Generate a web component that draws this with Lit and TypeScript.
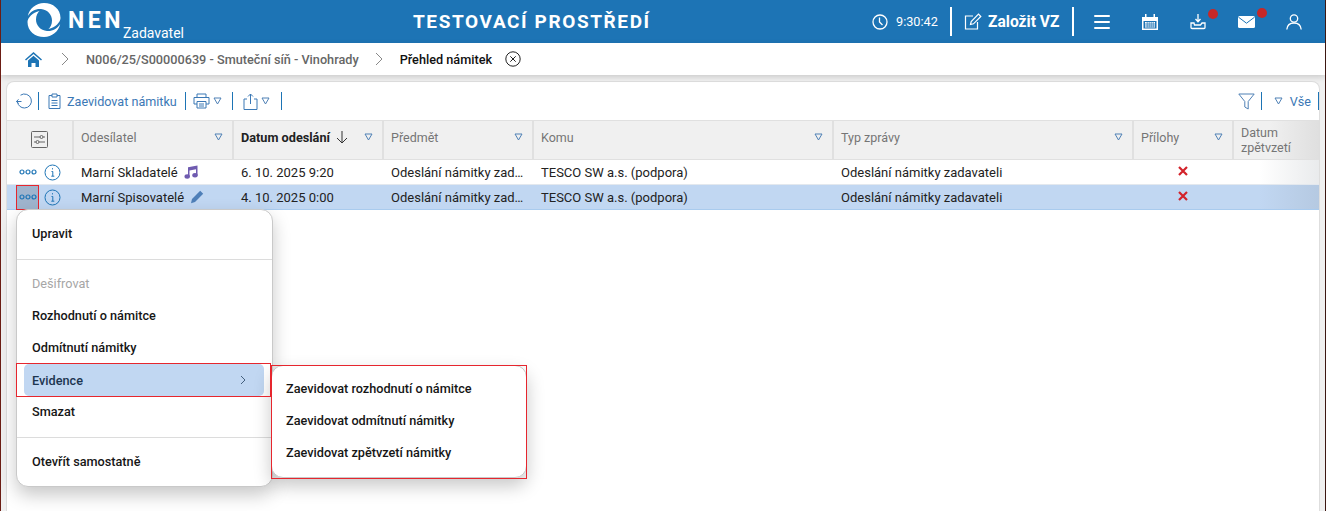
import { LitElement, html, css, svg } from 'lit';
import { customElement } from 'lit/decorators.js';

const tri = svg`<svg class="tri" width="9" height="8" viewBox="0 0 9 8"><path d="M1 1h7L4.500 7z" fill="none" stroke="currentColor" stroke-width="1"/></svg>`;

const columns = [
  { label: 'Odesílatel', width: 160 },
  { label: 'Datum odeslání', width: 150, sorted: true },
  { label: 'Předmět', width: 150 },
  { label: 'Komu', width: 300 },
  { label: 'Typ zprávy', width: 300 },
  { label: 'Přílohy', width: 100 },
];

const dots = html`<svg width="18" height="6" viewBox="0 0 18 6" fill="none" stroke="#1d74b5" stroke-width="1.200">
  <circle cx="3" cy="3" r="2" /><circle cx="9" cy="3" r="2" /><circle cx="15" cy="3" r="2" />
</svg>`;

const info = html`<svg width="17" height="17" viewBox="0 0 17 17" fill="none" stroke="#1d74b5">
  <circle cx="8.500" cy="8.500" r="7.500" /><path d="M7.500 7.500h1.300v4.500M7.300 12.200h3M8.500 4.200v1.200" />
</svg>`;

const music = html`<svg width="14" height="14" viewBox="0 0 14 14" fill="#6f5bb0">
  <path d="M4 2.200 13.500.5v10H12V4.300L5.500 5.500V12H4z" /><ellipse cx="3.200" cy="11.500" rx="2.700" ry="2.200" /><ellipse cx="11" cy="10.300" rx="2.700" ry="2.200" />
</svg>`;

const pencil = html`<svg width="14" height="14" viewBox="0 0 14 14" fill="#4e7fb8">
  <path d="M10.200.8l3 3L5 12l-4 1.300L2 9z" />
</svg>`;

const cross = html`<svg width="10" height="10" viewBox="0 0 10 10" stroke="#d3222a" stroke-width="2.200">
  <path d="M1 1l8 8M9 1l-8 8" />
</svg>`;

const rows = [
  { sender: 'Marní Skladatelé', icon: music, date: '6. 10. 2025 9:20', selected: false },
  { sender: 'Marní Spisovatelé', icon: pencil, date: '4. 10. 2025 0:00', selected: true },
];

@customElement('app-root')
export class AppRoot extends LitElement {
  static styles = css`
    :host {
      display: block;
      height: 511px;
      overflow: hidden;
      position: relative;
      background: #f0f0f0;
      font-family: Roboto, 'Liberation Sans', sans-serif;
      font-size: 13px;
      color: #222;
      border-left: 1px solid #6b1d14;
      border-right: 1px solid #3d1712;
      box-sizing: border-box;
    }

    /* top bar */
    .top {
      height: 43px;
      background: #1d74b5;
      color: #fff;
      display: flex;
      align-items: center;
      position: relative;
    }
    .logo {
      margin-left: 26px;
      display: flex;
      align-items: flex-start;
      width: 360px;
    }
    .nen {
      font-size: 23px;
      font-weight: 700;
      letter-spacing: 3.500px;
      margin: 3px 0 0 7px;
      line-height: 30px;
    }
    .role {
      font-size: 14px;
      margin-top: 22px;
      margin-left: -1px;
    }
    .env {
      position: absolute;
      left: 412px;
      top: 10px;
      font-size: 19px;
      font-weight: 700;
      letter-spacing: 1.600px;
      line-height: 24px;
    }
    .top-right {
      margin-left: auto;
      display: flex;
      align-items: center;
      height: 100%;
    }
    .clock {
      display: flex;
      align-items: center;
      gap: 8px;
      width: 78px;
      font-size: 12.700px;
    }
    .vr {
      width: 2px;
      height: 29px;
      background: #fff;
    }
    .create {
      display: flex;
      align-items: center;
      gap: 6px;
      font-size: 15.600px;
      font-weight: 700;
      width: 120px;
      padding-left: 12px;
      box-sizing: border-box;
    }
    .top-icons {
      display: flex;
      align-items: center;
      margin-left: 20px;
      gap: 32px;
      margin-right: 23px;
    }
    .user {
      margin-left: -1px;
    }
    .badged {
      position: relative;
      display: flex;
    }
    .badge {
      position: absolute;
      width: 10px;
      height: 10px;
      border-radius: 50%;
      background: #c62828;
      top: -5px;
      right: -12px;
    }
    .badge.mail {
      top: -8px;
    }

    /* breadcrumb */
    .crumbs {
      height: 32px;
      background: #fff;
      display: flex;
      align-items: center;
      box-shadow: 0 2px 6px rgba(0, 0, 0, 0.16);
      position: relative;
      font-size: 12.700px;
      font-weight: 500;
      color: #666;
      padding-left: 24px;
    }
    .crumbs .current {
      color: #111;
    }
    .sep-first {
      margin: 0 17px 0 19px;
    }
    .sep-next {
      margin: 0 17px 0 16px;
    }
    .close {
      margin-left: 13px;
      display: flex;
    }

    /* card */
    .card {
      margin: 6px 5px 0 5px;
      height: 440px;
      background: #fff;
      border: 1px solid #dedede;
      border-bottom: 0;
      border-radius: 8px 8px 0 0;
      overflow: hidden;
    }
    .toolbar {
      height: 38px;
      display: flex;
      align-items: center;
      padding-left: 9px;
      color: #3b78b5;
      font-size: 12.600px;
      box-sizing: border-box;
    }
    .tb-sep {
      width: 1px;
      height: 18px;
      background: #1d74b5;
    }
    .tb-btn {
      display: flex;
      align-items: center;
    }
    .tri {
      color: #4f80b5;
      display: block;
    }
    .tb-right {
      margin-left: auto;
      display: flex;
      align-items: center;
    }

    /* table */
    .head {
      height: 38px;
      display: flex;
      background: #f0f0f0;
      border-top: 1px solid #e0e0e0;
      border-bottom: 1px solid #e0e0e0;
      color: #757575;
      font-size: 12.500px;
      position: relative;
    }
    .head::after {
      content: '';
      position: absolute;
      right: 0;
      top: 0;
      bottom: 0;
      width: 50px;
      background: linear-gradient(to right, rgba(120, 120, 120, 0), rgba(120, 120, 120, 0.14));
    }
    .hcell {
      border-left: 2px solid #e0e0e0;
      display: flex;
      align-items: center;
      justify-content: space-between;
      padding: 0 9px 6px 7px;
      box-sizing: border-box;
      flex: none;
    }
    .hcell.sorted {
      color: #222;
      font-weight: 700;
      font-size: 12.700px;
    }
    .hcell .name {
      display: flex;
      align-items: center;
      gap: 6px;
    }
    .hcell.first {
      border-left: 0;
      width: 65px;
      justify-content: center;
      padding: 0 0 1px;
    }
    .hcell.last {
      flex: 1;
      line-height: 15px;
      padding-bottom: 0;
    }
    .row {
      height: 24px;
      display: flex;
      align-items: center;
      border-bottom: 1px solid #e3e8ee;
      font-size: 13px;
      color: #222;
      position: relative;
    }
    .row.selected {
      background: #c1d7f2;
      border-bottom-color: #a9cbee;
    }
    .row::after {
      content: '';
      position: absolute;
      right: 0;
      top: 0;
      bottom: 0;
      width: 60px;
      background: linear-gradient(to right, rgba(120, 130, 140, 0), rgba(120, 130, 140, 0.16));
    }
    .actions {
      width: 65px;
      flex: none;
      display: flex;
      align-items: center;
      height: 100%;
    }
    .more {
      width: 23px;
      height: 25px;
      margin-left: 9px;
      flex: none;
      display: flex;
      align-items: center;
      justify-content: center;
      box-sizing: border-box;
      margin-right: 5px;
    }
    .row.selected .more {
      background: #9fb4cd;
      outline: 1px solid #e6262e;
      outline-offset: -1px;
    }
    .cell {
      flex: none;
      box-sizing: border-box;
      padding-left: 9px;
      white-space: nowrap;
      display: flex;
      align-items: center;
      gap: 6px;
    }
    .cell.center {
      justify-content: center;
      padding: 0 0 3px 2px;
    }

    /* context menus */
    .menu {
      position: absolute;
      background: #fff;
      border: 1px solid #c9c9c9;
      border-radius: 12px;
      box-shadow: 0 8px 18px rgba(0, 0, 0, 0.22);
      box-sizing: border-box;
      font-size: 12.700px;
      font-weight: 500;
      color: #161616;
    }
    .main {
      left: 15px;
      top: 209px;
      width: 257px;
      height: 278px;
    }
    .item {
      height: 32px;
      display: flex;
      align-items: center;
      padding-left: 15px;
    }
    .item.disabled {
      color: #a6a6a6;
      font-weight: 400;
    }
    .item.active {
      background: #c1d7f2;
      color: #1c3550;
      margin: 1px 8px -1px 7px;
      padding: 0 18px 0 8px;
      border-radius: 5px;
      justify-content: space-between;
    }
    .divider {
      height: 1px;
      background: #dcdcdc;
    }
    .sub {
      left: 270px;
      top: 365px;
      width: 256px;
      height: 113px;
      padding-top: 6px;
    }
    .sub .item {
      padding-left: 14px;
    }
    .frame {
      position: absolute;
      border: 1px solid #e6262e;
      box-sizing: border-box;
      pointer-events: none;
    }
    .frame.evidence {
      left: 15px;
      top: 363px;
      width: 255px;
      height: 34px;
    }
    .frame.submenu {
      left: 270px;
      top: 365px;
      width: 256px;
      height: 114px;
    }
  `;

  render() {
    return html`
      <div class="top">
        <div class="logo">
          <svg width="34" height="34" viewBox="0 0 34 34" fill="#fff">
            <path d="M17 0C9 0 2.500 5.500.800 13c3-5 8.200-7.500 13.200-7 6.500.600 11 5.700 11 11.500 0 4-1.500 6.500-3.500 8.500 7-1.500 12-7 12-11C33.500 6 26 0 17 0z" />
            <path d="M17 34c8 0 14.500-5.500 16.200-13-3 5-8.200 7.500-13.200 7C13.500 27.400 9 22.300 9 16.500c0-4 1.500-6.500 3.500-8.500C5.500 9.500.500 15 .500 19 .500 28 8 34 17 34z" />
          </svg>
          <span class="nen">NEN</span>
          <span class="role">Zadavatel</span>
        </div>
        <div class="env">TESTOVACÍ PROSTŘEDÍ</div>
        <div class="top-right">
          <div class="clock">
            <svg width="16" height="16" viewBox="0 0 16 16" fill="none" stroke="#fff" stroke-width="1.300">
              <circle cx="8" cy="8" r="7" /><path d="M7.500 3.500V8l3 3" />
            </svg>
            9:30:42
          </div>
          <div class="vr"></div>
          <div class="create">
            <svg width="18" height="17" viewBox="0 0 18 17" fill="none" stroke="#fff" stroke-width="1.200">
              <path d="M9 3H1.500v13h12V9" /><path d="M6.500 11.500l.7-3L14.500 1.200l2.300 2.300-7.300 7.300z" />
            </svg>
            Založit VZ
          </div>
          <div class="vr"></div>
          <div class="top-icons">
            <svg width="16" height="14" viewBox="0 0 16 14" fill="#fff">
              <rect width="16" height="2" rx="1" /><rect y="6" width="16" height="2" rx="1" /><rect y="12" width="16" height="2" rx="1" />
            </svg>
            <svg width="16" height="16" viewBox="0 0 16 16" fill="#fff">
              <path d="M0 3h3V0h1.500v3h7V0H13v3h3v13H0zM1.500 7v7.500h13V7z" />
              <path d="M3 8h10v5.500H3z" /><path d="M5.200 8v5.500M7.200 8v5.500M9.200 8v5.500M11.200 8v5.500M3 10h10M3 12h10" stroke="#1d74b5" stroke-width=".7" />
            </svg>
            <span class="badged">
              <svg width="16" height="16" viewBox="0 0 16 16" fill="none" stroke="#fff" stroke-width="1.300">
                <path d="M8 0v7.500M5.500 5L8 7.800 10.500 5" /><path d="M4 9H1v4.500a1 1 0 001 1h12a1 1 0 001-1V9h-3l-1.500 2h-6z" />
              </svg>
              <span class="badge"></span>
            </span>
            <span class="badged">
              <svg width="17" height="12" viewBox="0 0 17 12" fill="#fff">
                <rect width="17" height="12" rx="1.500" />
                <path d="M.5 1.200l8 6 8-6" fill="none" stroke="#1d74b5" />
              </svg>
              <span class="badge mail"></span>
            </span>
            <svg class="user" width="16" height="16" viewBox="0 0 16 16" fill="none" stroke="#fff" stroke-width="1.300">
              <circle cx="8" cy="4.500" r="3.700" /><path d="M.8 15.500c.4-4 3-6.500 7.200-6.500s6.800 2.500 7.200 6.500" />
            </svg>
          </div>
        </div>
      </div>

      <div class="crumbs">
        <svg width="17" height="15" viewBox="0 0 17 15" fill="#1d74b5">
          <path d="M8.500 0L17 7.500l-1 1-7.500-6.500L1 8.500l-1-1z" /><path d="M3 8.500l5.500-4.800L14 8.500V15h-3.500v-4h-4v4H3z" />
        </svg>
        <svg class="sep-first" width="8" height="14" viewBox="0 0 8 14" fill="none" stroke="#888">
          <path d="M1 1l6 6-6 6" />
        </svg>
        <span>N006/25/S00000639 - Smuteční síň - Vinohrady</span>
        <svg class="sep-next" width="8" height="14" viewBox="0 0 8 14" fill="none" stroke="#888">
          <path d="M1 1l6 6-6 6" />
        </svg>
        <span class="current">Přehled námitek</span>
        <span class="close">
          <svg width="16" height="16" viewBox="0 0 16 16" fill="none" stroke="#222">
            <circle cx="8" cy="8" r="7.200" /><path d="M5.300 5.300l5.400 5.400M10.700 5.300l-5.400 5.400" />
          </svg>
        </span>
      </div>

      <div class="card">
        <div class="toolbar">
          <svg width="16" height="16" viewBox="0 0 16 16" fill="none" stroke="#3b78b5">
            <path d="M4.500 2.200A7 7 0 118.500 15 7 7 0 011.500 9" /><path d="M.5 8.500h5M2.500 6.300L.5 8.500l2 2.200" />
          </svg>
          <span class="tb-sep" style="margin:0 9px 0 6px"></span>
          <span class="tb-btn" style="gap:6px">
            <svg width="13" height="16" viewBox="0 0 13 16" fill="none" stroke="#3b78b5">
              <path d="M4 2.500H1v13h11v-13H9" /><path d="M4 1h5v3H4zM3.500 7.500h6M3.500 10h6M3.500 12.500h6" />
            </svg>
            Zaevidovat námitku
          </span>
          <span class="tb-sep" style="margin:0 7px 0 8px"></span>
          <span class="tb-btn" style="gap:3px">
            <svg width="17" height="16" viewBox="0 0 17 16" fill="none" stroke="#3b78b5">
              <path d="M4 4V1h9v3M4 11H1V4.500h15V11h-3" /><path d="M4 8.500h9v6.500H4zM6 11h5M6 13h5" />
            </svg>
            ${tri}
          </span>
          <span class="tb-sep" style="margin:0 10px"></span>
          <span class="tb-btn" style="gap:3px">
            <svg width="15" height="17" viewBox="0 0 15 17" fill="none" stroke="#3b78b5">
              <path d="M4 6H1v10.500h13V6h-3M7.500 11V1M5 3.500L7.500 1 10 3.500" />
            </svg>
            ${tri}
          </span>
          <span class="tb-sep" style="margin-left:11px"></span>
          <span class="tb-right">
            <svg width="17" height="17" viewBox="0 0 17 17" fill="none" stroke="#4f80b5">
              <path d="M.8 1h15.400l-6 7.500V16l-3.400-2V8.500z" />
            </svg>
            <span class="tb-sep" style="margin:0 12px 0 6px"></span>
            ${tri}
            <span style="margin:0 7px">Vše</span>
            <span class="tb-sep"></span>
          </span>
        </div>

        <div class="head">
          <div class="hcell first">
            <svg width="17" height="17" viewBox="0 0 17 17" fill="none" stroke="#666">
              <rect x=".5" y=".5" width="16" height="16" rx="1" /><path d="M3 6h6M12 6h2M3 11h2M8 11h6" /><circle cx="10.500" cy="6" r="1.500" /><circle cx="6.500" cy="11" r="1.500" />
            </svg>
          </div>
          ${columns.map(
            (c) => html`<div class="hcell ${c.sorted ? 'sorted' : ''}" style="width:${c.width}px">
              <span class="name">
                ${c.label}
                ${c.sorted
                  ? html`<svg width="12" height="13" viewBox="0 0 12 13" fill="none" stroke="#333">
                      <path d="M6 0v12M1 7l5 5 5-5" />
                    </svg>`
                  : ''}
              </span>
              ${tri}
            </div>`
          )}
          <div class="hcell last">Datum<br />zpětvzetí</div>
        </div>

        ${rows.map(
          (r) => html`<div class="row ${r.selected ? 'selected' : ''}">
            <div class="actions">
              <span class="more">${dots}</span>
              ${info}
            </div>
            <div class="cell" style="width:160px"><span>${r.sender}</span>${r.icon}</div>
            <div class="cell" style="width:150px">${r.date}</div>
            <div class="cell" style="width:150px">Odeslání námitky zad…</div>
            <div class="cell" style="width:300px">TESCO SW a.s. (podpora)</div>
            <div class="cell" style="width:300px">Odeslání námitky zadavateli</div>
            <div class="cell center" style="width:100px">${cross}</div>
          </div>`
        )}
      </div>

      <div class="menu main">
        <div class="item" style="margin-top:7px">Upravit</div>
        <div class="divider" style="margin-top:10px"></div>
        <div class="item disabled" style="margin-top:7px">Dešifrovat</div>
        <div class="item">Rozhodnutí o námitce</div>
        <div class="item">Odmítnutí námitky</div>
        <div class="item active">
          Evidence
          <svg width="6" height="10" viewBox="0 0 6 10" fill="none" stroke="#44607e"><path d="M1 1l4 4-4 4" /></svg>
        </div>
        <div class="item">Smazat</div>
        <div class="divider" style="margin-top:10px"></div>
        <div class="item" style="margin-top:7px">Otevřít samostatně</div>
      </div>
      <div class="menu sub">
        <div class="item">Zaevidovat rozhodnutí o námitce</div>
        <div class="item">Zaevidovat odmítnutí námitky</div>
        <div class="item">Zaevidovat zpětvzetí námitky</div>
      </div>
      <div class="frame evidence"></div>
      <div class="frame submenu"></div>
    `;
  }
}
